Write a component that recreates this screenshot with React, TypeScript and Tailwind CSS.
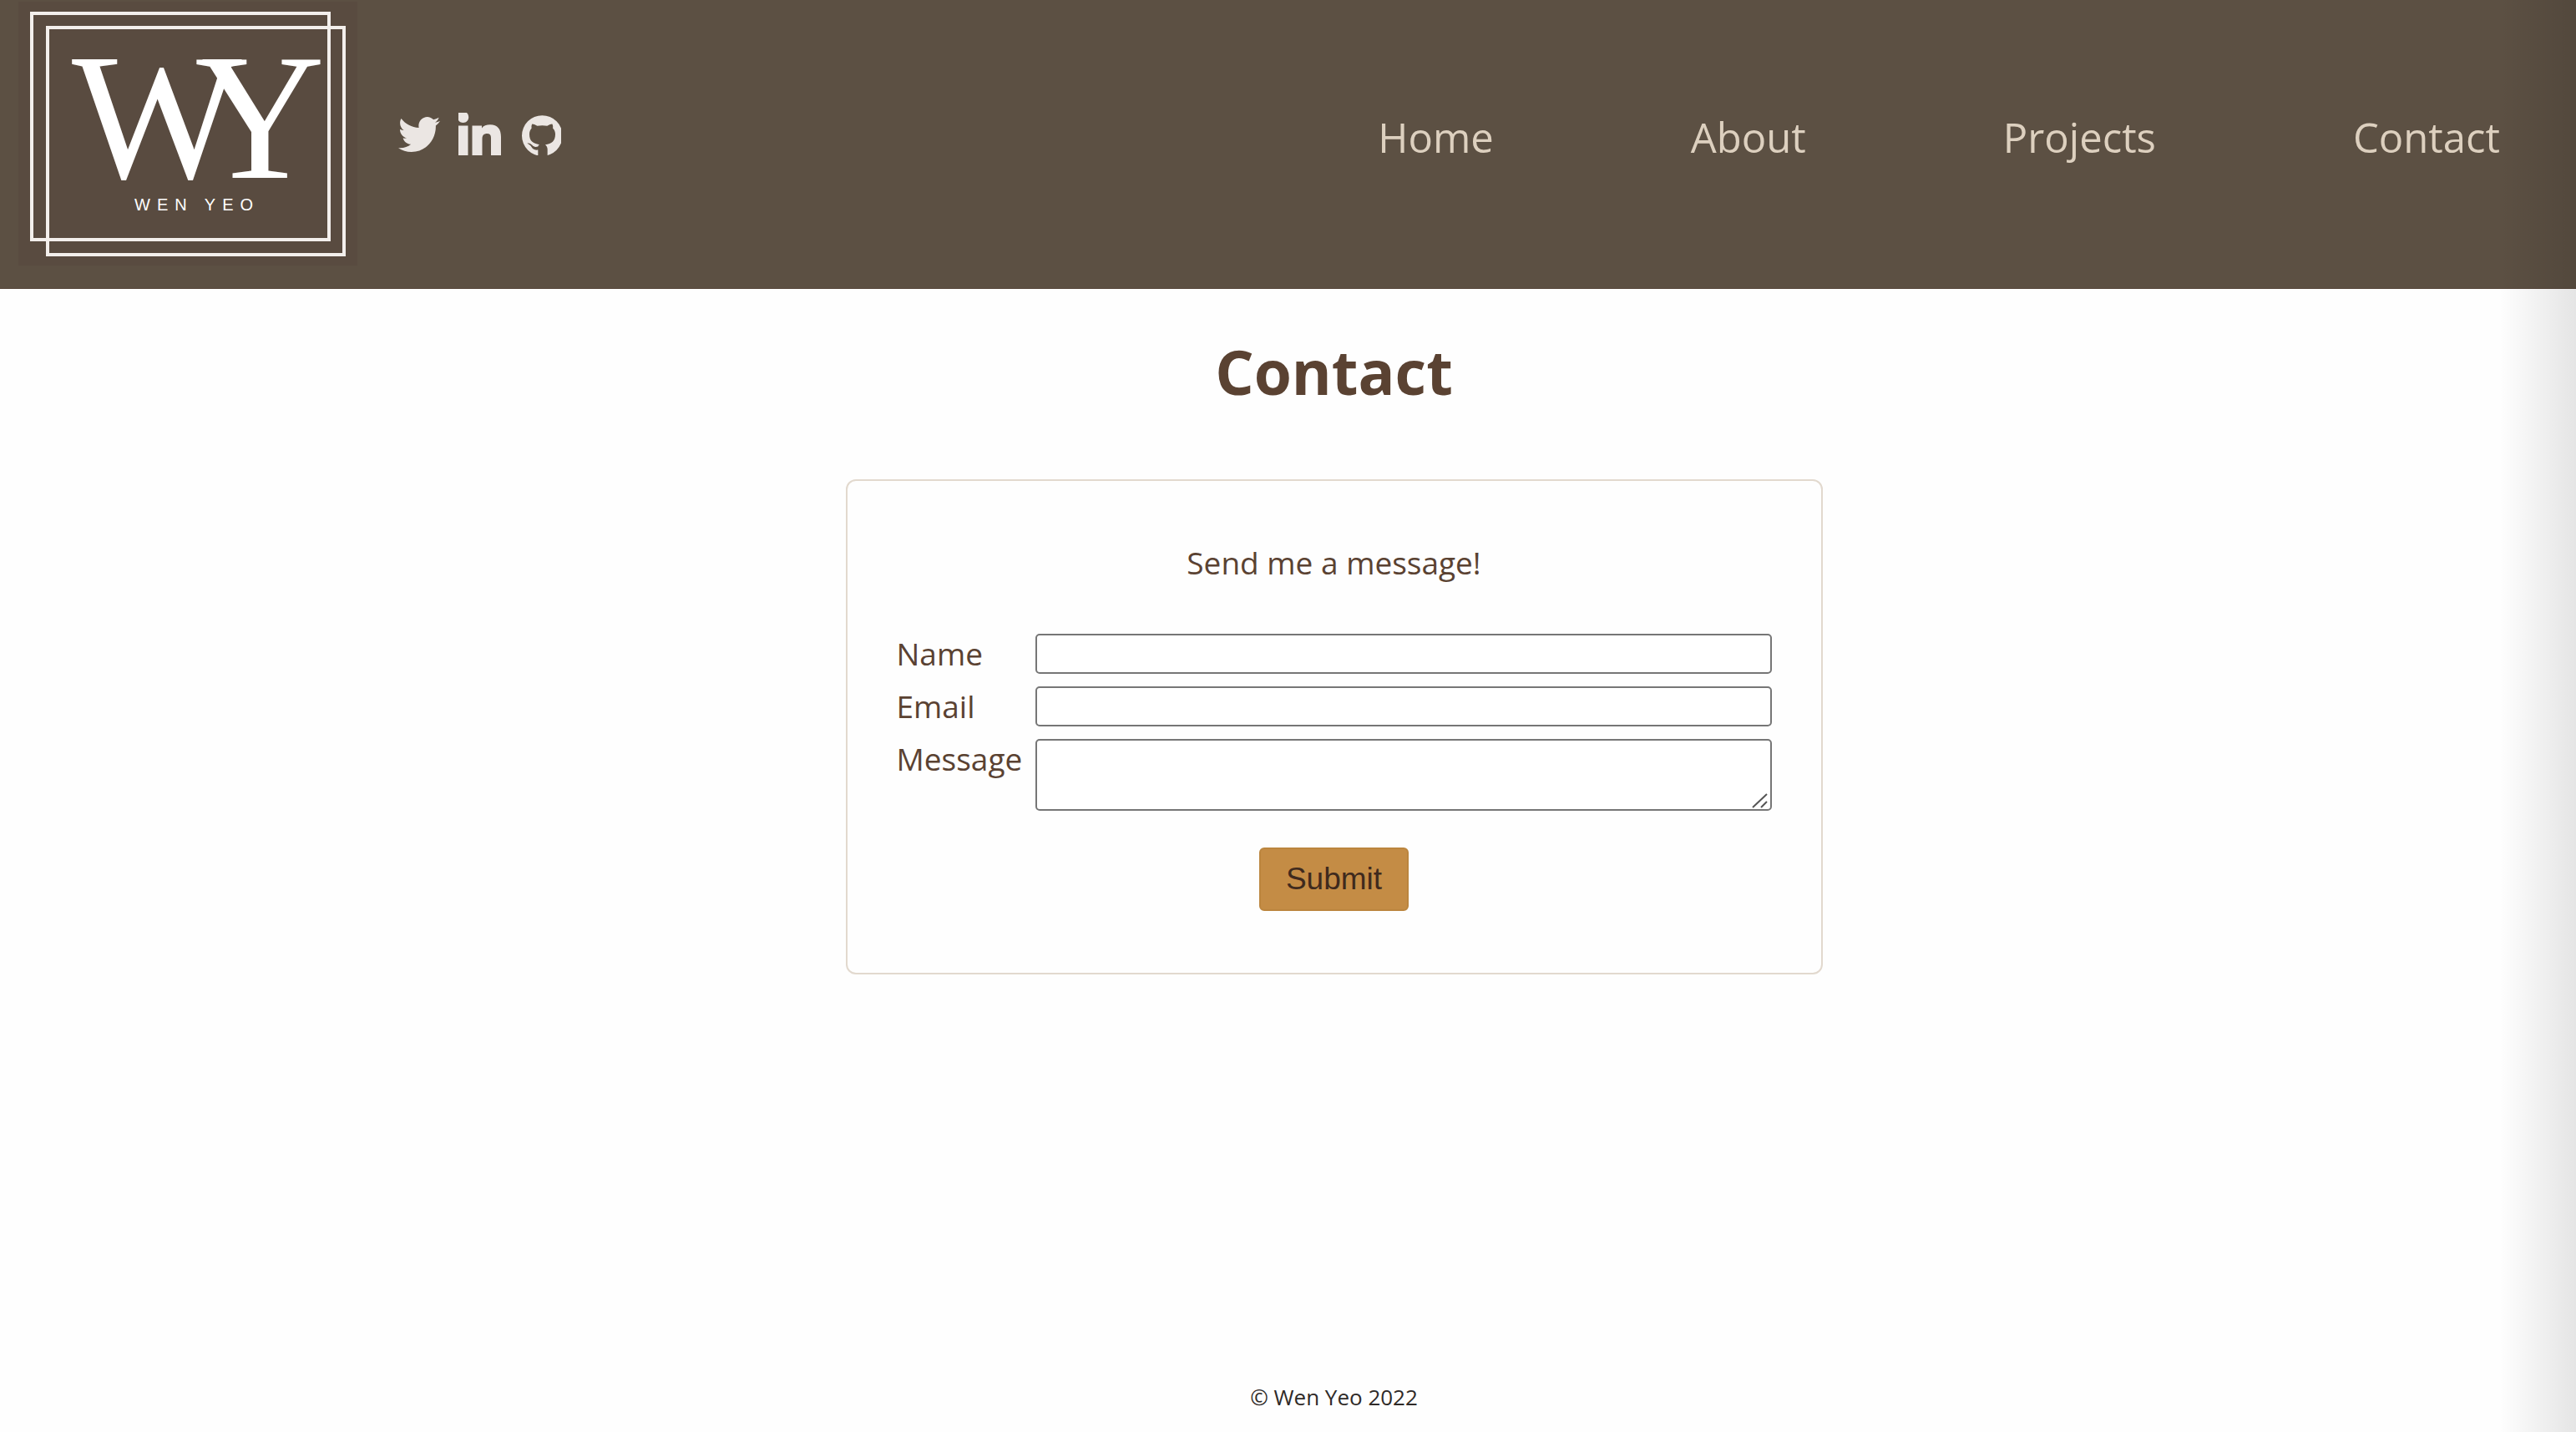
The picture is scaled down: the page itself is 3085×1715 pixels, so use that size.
const navItems = ["Home", "About", "Projects", "Contact"];

function Logo() {
  return (
    <svg viewBox="0 0 406 316" className="h-[316px] w-[406px] bg-[#594b40]" role="img" aria-label="Wen Yeo">
      <g fill="none" stroke="#f3efec" strokeWidth="4">
        <rect x="16" y="14" width="356" height="271" />
        <rect x="35" y="31" width="355" height="272" />
      </g>
      <g fill="#ffffff" className="font-['Liberation_Serif',serif] text-[216px]">
        <text x="64" y="211">W</text>
        <text x="211" y="211">Y</text>
      </g>
      <text x="139" y="250" fill="#ffffff" className="font-['Liberation_Sans',sans-serif] text-[20px] tracking-[8px]">
        WEN YEO
      </text>
    </svg>
  );
}

function TwitterIcon() {
  return (
    <svg viewBox="0 48 512 416" preserveAspectRatio="none" className="h-[42px] w-[50px]" fill="currentColor" aria-hidden="true">
      <path d="M459.37 151.716c.325 4.548.325 9.097.325 13.645 0 138.72-105.583 298.558-298.558 298.558-59.452 0-114.68-17.219-161.137-47.106 8.447.974 16.568 1.299 25.34 1.299 49.055 0 94.213-16.568 130.274-44.832-46.132-.975-84.792-31.188-98.112-72.772 6.498.974 12.995 1.624 19.818 1.624 9.421 0 18.843-1.3 27.614-3.573-48.081-9.747-84.143-51.98-84.143-102.985v-1.299c13.969 7.797 30.214 12.67 47.431 13.319-28.264-18.843-46.781-51.005-46.781-87.391 0-19.492 5.197-37.36 14.294-52.954 51.655 63.675 129.3 105.258 216.365 109.807-1.624-7.797-2.599-15.918-2.599-24.04 0-57.828 46.782-104.934 104.934-104.934 30.213 0 57.502 12.67 76.67 33.137 23.715-4.548 46.456-13.32 66.599-25.34-7.798 24.366-24.366 44.833-46.132 57.827 21.117-2.273 41.584-8.122 60.426-16.243-14.292 20.791-32.161 39.308-52.628 54.253z" />
    </svg>
  );
}

function LinkedInIcon() {
  return (
    <svg viewBox="0 0 51 51" className="h-[51px] w-[51px]" fill="currentColor" aria-hidden="true">
      <path d="M0 0h10c1.500 1.500 2.200 3.500 2.200 5.500c0 3.600-2.900 6.500-6.500 6.500C3.200 12 1 10.800 0 9z" />
      <path d="M0 15.500h11.500V51H0z" />
      <path d="M16.500 15.500H28v3c2-3 5.500-4.200 10-4.200c9 0 13 5.500 13 14.700v22H39V30c0-3.500-1.500-5-4.500-5c-4 0-6 2-6 6v20h-12z" />
    </svg>
  );
}

function GitHubIcon() {
  return (
    <svg viewBox="0 0 141 143" className="h-[48px] w-[47px]" fill="currentColor" aria-hidden="true">
      <path
        fillRule="evenodd"
        d="M73 0A73 73 0 1 0 73 146A73 73 0 1 0 73 0zM58 144V124C45 126 38 120 34 113C31 107 26 104 19 101C25 98 32 101 37 107C42 113 48 115 58 112C58 109 60 107 63 105C40 102 27 92 27 68C27 58 30 52 35 46C34 41 34 36 37 31C43 31 50 35 55 38Q73 35 91 38C96 35 103 31 109 31C112 36 112 41 111 46C117 52 120 59 120 68C120 92 107 103 84 105C89 110 92 115 92 122V144z"
      />
    </svg>
  );
}

const fieldClass =
  "block w-full rounded-[5px] border-2 border-[#767676] bg-white px-2 text-2xl outline-none";

export default function App() {
  return (
    <div className="relative flex min-h-screen flex-col bg-[#fefefe] font-['Open_Sans',sans-serif] text-[#5a4232]">
      <header className="flex items-center border-b border-[#544438] bg-[#5c5043] pt-[2px] pr-[91px] pb-[27px] pl-[22px]">
        <a href="#home">
          <Logo />
        </a>
        <div className="ml-[49px] flex items-end text-[#ebe6e3]">
          <a href="#twitter" aria-label="Twitter" className="pb-1">
            <TwitterIcon />
          </a>
          <a href="#linkedin" aria-label="LinkedIn" className="ml-[22px]">
            <LinkedInIcon />
          </a>
          <a href="#github" aria-label="GitHub" className="ml-[25px]">
            <GitHubIcon />
          </a>
        </div>
        <nav className="ml-auto flex gap-[236px] pt-2 text-[49px] leading-[64px] text-[#ddd0bf]">
          {navItems.map((item) => (
            <a key={item} href={`#${item.toLowerCase()}`}>
              {item}
            </a>
          ))}
        </nav>
      </header>

      <main className="flex flex-col items-center pt-[50px] pl-[110px]">
        <h1 className="text-[73px] leading-[98px] font-bold">Contact</h1>
        <form
          className="mt-20 flex w-full max-w-[1170px] flex-col rounded-xl border-2 border-[#e2d9ce] px-[59px] pt-[74px] pb-[74px] text-[37px] leading-[48px]"
          onSubmit={(e) => e.preventDefault()}
        >
          <p className="text-center">Send me a message!</p>
          <div className="mt-[61px] grid grid-cols-[166px_1fr] gap-y-[15px]">
            <label htmlFor="name">Name</label>
            <input id="name" type="text" className={`${fieldClass} h-12`} />
            <label htmlFor="email">Email</label>
            <input id="email" type="email" className={`${fieldClass} h-12`} />
            <label htmlFor="message">Message</label>
            <div className="relative">
              <textarea id="message" className={`${fieldClass} h-[86px] resize-none`} />
              <svg
                viewBox="0 0 20 18"
                className="pointer-events-none absolute right-[4px] bottom-[3px] h-[18px] w-[20px]"
                fill="none"
                stroke="#555555"
                strokeWidth="2"
                aria-hidden="true"
              >
                <path d="M1 17L18 1M11 17L18 10" />
              </svg>
            </div>
          </div>
          <button
            type="submit"
            className="mt-[44px] self-center rounded-md border-2 border-[#bb853e] bg-[#c48c45] px-[30px] py-3 font-['Liberation_Sans',sans-serif] text-[#3f2a1d]"
          >
            Submit
          </button>
        </form>
      </main>

      <footer className="mt-auto pb-[24px] pl-[110px] text-center text-[26px] leading-[36px] text-[#2f2a28]">
        © Wen Yeo 2022
      </footer>

      <div className="pointer-events-none absolute inset-y-0 right-0 w-[92px] bg-linear-to-r from-transparent to-black/10" />
    </div>
  );
}
